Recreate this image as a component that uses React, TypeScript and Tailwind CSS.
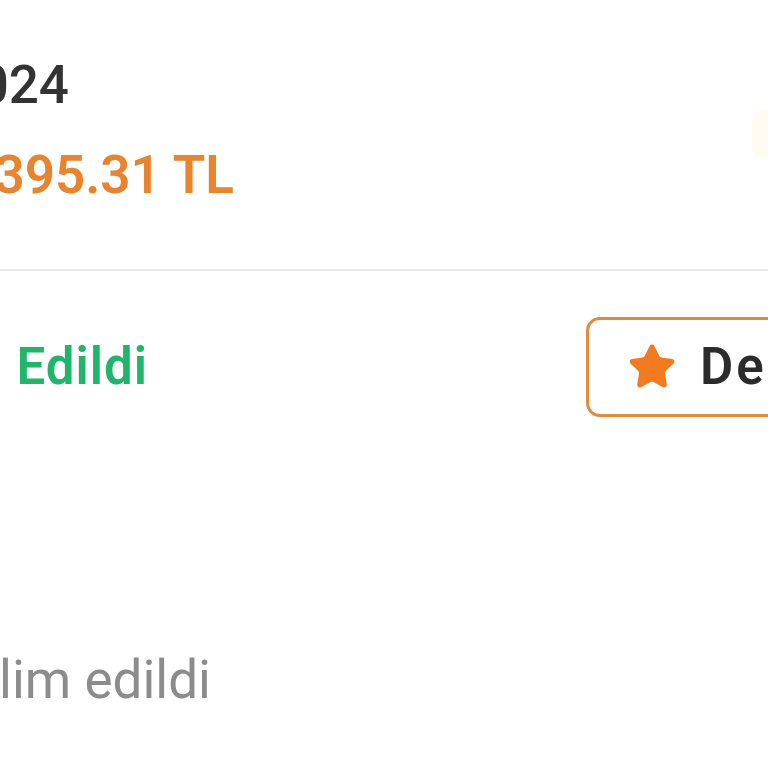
import { Star } from "lucide-react";

export default function App() {
  return (
    <div className="w-[768px] h-[768px] overflow-hidden bg-white font-['Roboto','Liberation_Sans',sans-serif]">
      <div className="flex items-start justify-between pt-[54px]">
        <div className="flex flex-col gap-[28px]">
          <div className="w-[69px] flex justify-end whitespace-nowrap text-[53px] leading-[62px] font-medium text-[#333333]">
            12 Mart 2024
          </div>
          <div className="w-[234px] flex justify-end whitespace-nowrap text-[53px] leading-[62px] font-semibold text-[#e8832e]">
            1.395.31 TL
          </div>
        </div>
        <div className="mt-[56px] w-[80px] h-[48px] -mr-[64px] rounded-l-[10px] bg-[#fffbf1]" />
      </div>

      <div className="mt-[63px] h-[2px] bg-[#ebebeb]" />

      <div className="flex items-center pt-[46px]">
        <div className="w-[148px] shrink-0 flex justify-end whitespace-nowrap text-[51px] leading-[58px] font-semibold tracking-[1px] text-[#1fb56a]">
          Teslim Edildi
        </div>
        <div className="ml-[438px] shrink-0 flex items-center gap-[23px] h-[100px] pl-[38px] pr-[40px] rounded-[14px] border-[3px] border-[#e38a3f] bg-white">
          <Star size={50} fill="#f37a1f" stroke="#f37a1f" strokeWidth={1.5} />
          <span className="whitespace-nowrap text-[51px] leading-[58px] font-semibold tracking-[3px] text-[#2b2b2b]">
            Değerlendir
          </span>
        </div>
      </div>

      <div className="pt-[232px]">
        <div className="w-[211px] flex justify-end whitespace-nowrap text-[53px] leading-[62px] font-normal text-[#8c8c8c]">
          Paket teslim edildi
        </div>
      </div>
    </div>
  );
}
